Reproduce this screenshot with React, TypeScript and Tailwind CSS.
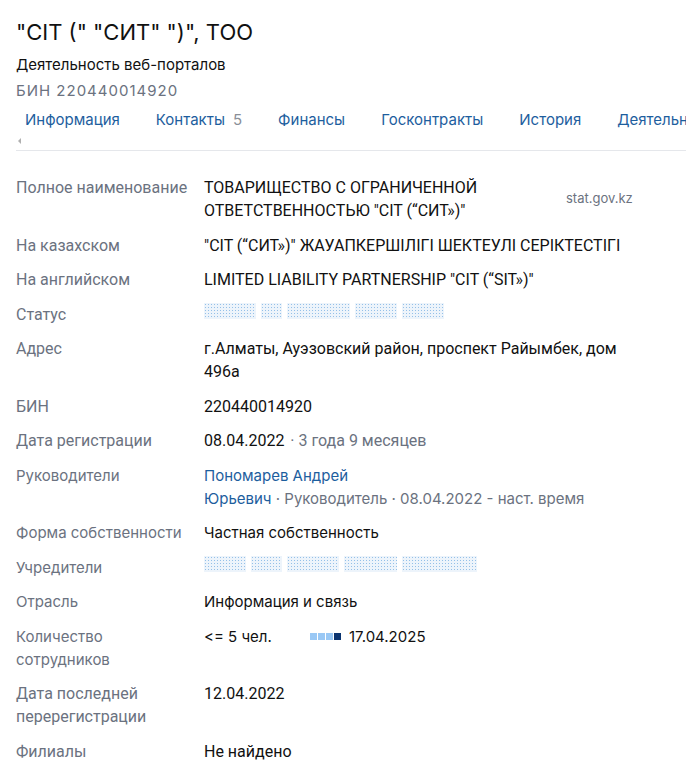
import type { ReactNode } from 'react'

const roboto = "font-['Roboto',sans-serif] text-[16px]"
const inter = "font-['Inter',sans-serif] text-[15px]"

function Blur({ w }: { w: number }) {
  return (
    <span
      className="inline-block h-[16px] bg-[#edf4fb] bg-[radial-gradient(circle,#94c0e8_0.8px,transparent_1px)] bg-[length:3px_3px] align-middle"
      style={{ width: w }}
    />
  )
}

function Row({ label, children, font = roboto }: { label: ReactNode; children: ReactNode; font?: string }) {
  return (
    <div className={`flex ${font} leading-[23px]`}>
      <div className="w-[188px] shrink-0 pr-3 text-[#6b7280]">{label}</div>
      <div className="w-[440px] text-[#111]">{children}</div>
    </div>
  )
}

const tabs: [string, string?][] = [
  ['Информация'],
  ['Контакты', '5'],
  ['Финансы'],
  ['Госконтракты'],
  ['История'],
  ['Деятельность'],
]

export default function App() {
  return (
    <div className="h-[779px] w-[686px] overflow-hidden bg-white pl-[16px]">
      <h1 className="pt-[17px] font-['Inter',sans-serif] text-[22px] leading-[30px] text-[#111]">
        "CIT (" "СИТ" ")", ТОО
      </h1>
      <div className={`${inter} mt-[8px] leading-[20px] text-[#111]`}>Деятельность веб-порталов</div>
      <div className={`${inter} mt-[6px] leading-[20px] tracking-[1px] text-[#6b7280]`}>БИН 220440014920</div>
      <div className="mt-[7px] overflow-hidden whitespace-nowrap border-b border-[#e5e7eb]">
        <div className={`${inter} flex gap-[36px] pl-[9px] leading-[24px] text-[#1d5e9e]`}>
          {tabs.map(([name, count]) => (
            <span key={name}>
              {name}
              {count ? <span className="ml-[8px] text-[#8a8f98]">{count}</span> : null}
            </span>
          ))}
        </div>
        <div className="flex h-[18px] items-center pl-[2px]">
          <span className="block h-0 w-0 border-y-[3px] border-r-[3px] border-y-transparent border-r-[#b0b0b0]" />
        </div>
      </div>

      <div className="mt-[25px] flex flex-col gap-y-[11.5px]">
        <Row label="Полное наименование">
          <div className="flex">
            <div className="w-[340px]">
              ТОВАРИЩЕСТВО С ОГРАНИЧЕННОЙ
              <br />
              ОТВЕТСТВЕННОСТЬЮ "CIT (“СИТ»)"
            </div>
            <div className="ml-[22px] pt-[11px] font-['Inter',sans-serif] text-[13px] text-[#6b7280]">stat.gov.kz</div>
          </div>
        </Row>
        <Row label="На казахском">"CIT (“СИТ»)" ЖАУАПКЕРШІЛІГІ ШЕКТЕУЛІ СЕРІКТЕСТІГІ</Row>
        <Row label="На английском">LIMITED LIABILITY PARTNERSHIP "CIT (“SIT»)"</Row>
        <Row label="Статус">
          <div className="flex gap-[5px]">
            <Blur w={52} />
            <Blur w={21} />
            <Blur w={63} />
            <Blur w={42} />
            <Blur w={42} />
          </div>
        </Row>
        <Row label="Адрес">
          г.Алматы, Ауэзовский район, проспект Райымбек, дом
          <br />
          496а
        </Row>
        <Row label="БИН">220440014920</Row>
        <Row label="Дата регистрации">
          08.04.2022 <span className="ml-[2px] text-[#6b7280]">· 3 года 9 месяцев</span>
        </Row>
        <Row label="Руководители" font={inter}>
          <span className="text-[#1d5e9e]">Пономарев Андрей</span>
          <br />
          <span className="text-[#1d5e9e]">Юрьевич</span>
          <span className="text-[#6b7280]"> · Руководитель · 08.04.2022 - наст. время</span>
        </Row>
        <Row label="Форма собственности" font={inter}>Частная собственность</Row>
        <Row label="Учредители" font={inter}>
          <div className="flex gap-[5px]">
            <Blur w={42} />
            <Blur w={31} />
            <Blur w={52} />
            <Blur w={53} />
            <Blur w={75} />
          </div>
        </Row>
        <Row label="Отрасль" font={inter}>Информация и связь</Row>
        <Row
          label={
            <>
              Количество
              <br />
              сотрудников
            </>
          }
          font={inter}
        >
          <div className="flex items-center">
            <span className="w-[106px]">&lt;= 5 чел.</span>
            <span className="flex gap-[1px]">
              <span className="h-[7px] w-[7px] bg-[#99c8f5]" />
              <span className="h-[7px] w-[7px] bg-[#99c8f5]" />
              <span className="h-[7px] w-[7px] bg-[#99c8f5]" />
              <span className="h-[7px] w-[7px] bg-[#0b3470]" />
            </span>
            <span className="ml-[8px]">17.04.2025</span>
          </div>
        </Row>
        <Row
          label={
            <>
              Дата последней
              <br />
              перерегистрации
            </>
          }
        >
          12.04.2022
        </Row>
        <Row label="Филиалы">Не найдено</Row>
      </div>
    </div>
  )
}
